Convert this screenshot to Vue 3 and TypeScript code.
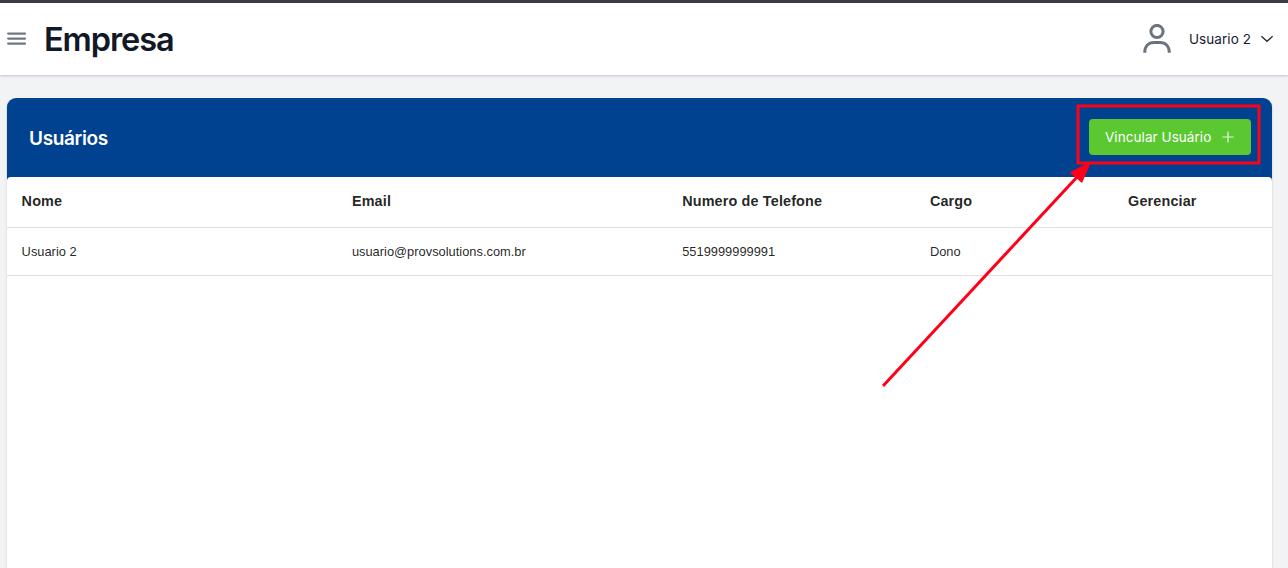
<script setup lang="ts">
interface User {
  name: string
  email: string
  phone: string
  role: string
}

const columns: string[] = ['Nome', 'Email', 'Numero de Telefone', 'Cargo', 'Gerenciar']
const users: User[] = [
  { name: 'Usuario 2', email: 'usuario@provsolutions.com.br', phone: '5519999999991', role: 'Dono' },
]
</script>

<template>
  <div class="page">
    <header class="topbar">
      <button class="menu" aria-label="Menu">
        <svg width="20" height="14" viewBox="0 0 20 14">
          <path d="M1.2 1.6h16.8M1.2 6.6h16.8M1.2 11.6h16.8" />
        </svg>
      </button>
      <h1>Empresa</h1>
      <div class="account">
        <svg class="avatar" width="28" height="30" viewBox="0 0 28 30">
          <circle cx="14" cy="7.5" r="6.1" />
          <path d="M1.7 28.7C1.7 22.6 5.4 18.6 11 18.6H17C22.6 18.6 26.3 22.6 26.3 28.7" />
        </svg>
        <span class="account-name">Usuario 2</span>
        <svg class="chevron" width="14" height="8" viewBox="0 0 14 8">
          <path d="M1.4 1.3L7 6.3l5.6-5" />
        </svg>
      </div>
    </header>

    <main class="card">
      <div class="card-head">
        <h2>Usuários</h2>
        <button class="link-user">
          <span>Vincular Usuário</span>
          <svg width="12" height="12" viewBox="0 0 12 12"><path d="M6 .5v11M.5 6h11" /></svg>
        </button>
      </div>
      <div class="table">
        <div class="row head">
          <span v-for="column in columns" :key="column">{{ column }}</span>
        </div>
        <div v-for="user in users" :key="user.email" class="row">
          <span>{{ user.name }}</span>
          <span>{{ user.email }}</span>
          <span>{{ user.phone }}</span>
          <span>{{ user.role }}</span>
          <span></span>
        </div>
      </div>
    </main>

    <svg class="annotation" width="1288" height="568" viewBox="0 0 1288 568">
      <rect x="1078" y="106" width="181" height="57" />
      <path class="shaft" d="M883 386L1078 176" />
      <path class="tip" d="M1091.5 161L1069.5 172.5L1082 183Z" />
    </svg>
  </div>
</template>

<style>
body {
  margin: 0;
}
</style>

<style scoped>
.page {
  position: relative;
  box-sizing: border-box;
  display: flex;
  flex-direction: column;
  height: 568px;
  overflow: hidden;
  background: #f2f3f5;
  font-family: Inter, sans-serif;
}
.topbar {
  box-sizing: border-box;
  flex: none;
  display: flex;
  align-items: center;
  height: 75px;
  padding: 0 14px 0 7px;
  border-top: 3px solid #393b47;
  background: #fff;
  box-shadow: 0 1px 2px rgba(30, 40, 70, 0.22);
}
button {
  border: 0;
  padding: 0;
  background: none;
  font-family: inherit;
}
.menu {
  display: flex;
  width: 20px;
}
svg {
  display: block;
  flex: none;
  fill: none;
}
.menu svg {
  stroke: #6f7684;
  stroke-width: 2.3;
  stroke-linecap: round;
}
h1 {
  margin: 2px 0 0 17px;
  color: #111827;
  font-size: 32.5px;
  font-weight: 600;
  line-height: 40px;
  letter-spacing: -1.1px;
}
.account {
  display: flex;
  align-items: center;
  margin-left: auto;
}
.avatar {
  stroke: #6b7280;
  stroke-width: 3;
}
.account-name {
  margin-left: 18px;
  width: 71px;
  white-space: nowrap;
  color: #182130;
  font-size: 13.5px;
  line-height: 20px;
  letter-spacing: 0.06px;
}
.chevron {
  stroke: #1f2937;
  stroke-width: 1.3;
}
.card {
  flex: 1;
  display: flex;
  flex-direction: column;
  margin: 23px 16px 0 7px;
  border-radius: 9px 9px 0 0;
  background: #004290;
  box-shadow: 0 1px 2px rgba(30, 40, 70, 0.24);
}
.card-head {
  box-sizing: border-box;
  flex: none;
  display: flex;
  align-items: flex-start;
  justify-content: space-between;
  height: 79px;
  padding: 21px 21px 0 22px;
}
h2 {
  margin: 0;
  padding-top: 8px;
  color: #fff;
  font-size: 19px;
  font-weight: 600;
  line-height: 24px;
  letter-spacing: -0.35px;
}
.link-user {
  box-sizing: border-box;
  display: flex;
  align-items: center;
  justify-content: space-between;
  width: 162px;
  height: 36px;
  padding: 0 17px 0 16px;
  border-radius: 4px;
  background: #5bc831;
  color: #fff;
  font-size: 13.5px;
  font-weight: 400;
  letter-spacing: 0.06px;
  white-space: nowrap;
}
.link-user svg {
  stroke: #e4f7dc;
  stroke-width: 1.2;
}
.table {
  flex: 1;
  border-radius: 4px 4px 0 0;
  background: #fff;
}
.row {
  box-sizing: border-box;
  display: grid;
  grid-template-columns: 330.3px 330.3px 247.7px 198.2px 1fr;
  align-items: center;
  height: 48px;
  padding-left: 14.6px;
  border-bottom: 1px solid #e0e0e0;
  color: rgba(0, 0, 0, 0.87);
  font-family: "Liberation Sans", Arial, sans-serif;
  font-size: 12.87px;
}
.row.head {
  height: 51px;
  padding-bottom: 3px;
  font-size: 14.4px;
  font-weight: 700;
  letter-spacing: 0.15px;
}
.annotation {
  position: absolute;
  top: 0;
  left: 0;
  pointer-events: none;
}
.annotation rect,
.annotation .shaft {
  stroke: #ff0018;
  stroke-width: 3;
}
.annotation .tip {
  fill: #ff0018;
}
</style>
